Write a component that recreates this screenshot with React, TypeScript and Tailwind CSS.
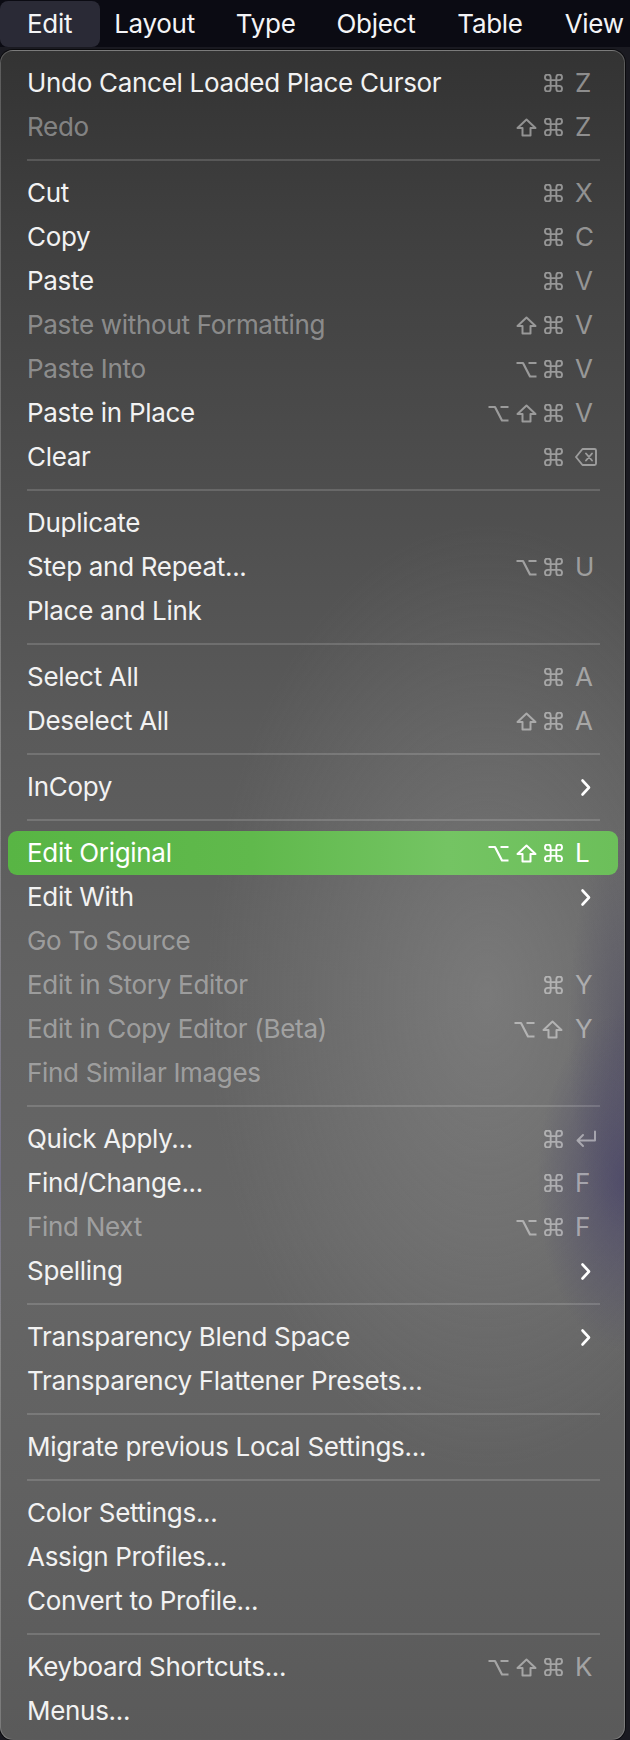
import React from "react";

type Mod = "opt" | "shift" | "cmd";
type Item =
  | { label: string; dis?: boolean; mods?: Mod[]; k?: string; sub?: boolean; hi?: boolean }
  | "sep";

const items: Item[] = [
  { label: "Undo Cancel Loaded Place Cursor", mods: ["cmd"], k: "Z" },
  { label: "Redo", dis: true, mods: ["shift", "cmd"], k: "Z" },
  "sep",
  { label: "Cut", mods: ["cmd"], k: "X" },
  { label: "Copy", mods: ["cmd"], k: "C" },
  { label: "Paste", mods: ["cmd"], k: "V" },
  { label: "Paste without Formatting", dis: true, mods: ["shift", "cmd"], k: "V" },
  { label: "Paste Into", dis: true, mods: ["opt", "cmd"], k: "V" },
  { label: "Paste in Place", mods: ["opt", "shift", "cmd"], k: "V" },
  { label: "Clear", mods: ["cmd"], k: "del" },
  "sep",
  { label: "Duplicate" },
  { label: "Step and Repeat...", mods: ["opt", "cmd"], k: "U" },
  { label: "Place and Link" },
  "sep",
  { label: "Select All", mods: ["cmd"], k: "A" },
  { label: "Deselect All", mods: ["shift", "cmd"], k: "A" },
  "sep",
  { label: "InCopy", sub: true },
  "sep",
  { label: "Edit Original", hi: true, mods: ["opt", "shift", "cmd"], k: "L" },
  { label: "Edit With", sub: true },
  { label: "Go To Source", dis: true },
  { label: "Edit in Story Editor", dis: true, mods: ["cmd"], k: "Y" },
  { label: "Edit in Copy Editor (Beta)", dis: true, mods: ["opt", "shift"], k: "Y" },
  { label: "Find Similar Images", dis: true },
  "sep",
  { label: "Quick Apply...", mods: ["cmd"], k: "ret" },
  { label: "Find/Change...", mods: ["cmd"], k: "F" },
  { label: "Find Next", dis: true, mods: ["opt", "cmd"], k: "F" },
  { label: "Spelling", sub: true },
  "sep",
  { label: "Transparency Blend Space", sub: true },
  { label: "Transparency Flattener Presets..." },
  "sep",
  { label: "Migrate previous Local Settings..." },
  "sep",
  { label: "Color Settings..." },
  { label: "Assign Profiles..." },
  { label: "Convert to Profile..." },
  "sep",
  { label: "Keyboard Shortcuts...", mods: ["opt", "shift", "cmd"], k: "K" },
  { label: "Menus..." },
];

const CmdGlyph = () => (
  <svg width="19" height="18" viewBox="2.5 2.5 19 19" fill="none" stroke="currentColor" strokeWidth="2" strokeLinecap="round" strokeLinejoin="round">
    <path d="M15 6v12a3 3 0 1 0 3-3H6a3 3 0 1 0 3 3V6a3 3 0 1 0-3 3h12a3 3 0 1 0-3-3" />
  </svg>
);
const ShiftGlyph = () => (
  <svg width="21" height="19" viewBox="0 0 21 19" fill="none" stroke="currentColor" strokeWidth="2" strokeLinejoin="round">
    <path d="M10.5 1.5 L19.5 10 H14.5 V17.5 H6.5 V10 H1.5 Z" />
  </svg>
);
const OptGlyph = () => (
  <svg width="21" height="17" viewBox="0 0 21 17" fill="none" stroke="currentColor" strokeWidth="2.2" strokeLinecap="butt" strokeLinejoin="round">
    <path d="M0.5 2 H7 L14 15.5 H20.5 M12.5 2 H20.5" />
  </svg>
);
const DelGlyph = () => (
  <svg width="22" height="18" viewBox="0 0 22 18" fill="none" stroke="currentColor" strokeWidth="1.9" strokeLinejoin="round" strokeLinecap="round">
    <path d="M7.5 1 H19.5 a1.5 1.5 0 0 1 1.5 1.5 V15.5 a1.5 1.5 0 0 1 -1.5 1.5 H7.5 L1 9 Z" />
    <path d="M11 5.5 L17 12.5 M17 5.5 L11 12.5" />
  </svg>
);
const RetGlyph = () => (
  <svg width="22" height="18" viewBox="0 0 22 18" fill="none" stroke="currentColor" strokeWidth="2" strokeLinejoin="round" strokeLinecap="round">
    <path d="M20 1.5 V10.5 H2.5 M8 5 L2.5 10.5 L8 16" />
  </svg>
);
const Chevron = () => (
  <svg width="11" height="19" viewBox="0 0 11 19" fill="none" stroke="currentColor" strokeWidth="2.6" strokeLinecap="round" strokeLinejoin="round">
    <path d="M2.5 2.5 L9 9.5 L2.5 16.5" />
  </svg>
);

const modGlyph = (m: Mod) => (m === "cmd" ? <CmdGlyph /> : m === "shift" ? <ShiftGlyph /> : <OptGlyph />);

function Shortcut({ mods, k }: { mods: Mod[]; k: string }) {
  return (
    <div className="flex items-center">
      <div className="flex items-center gap-[7px]">
        {mods.map((m, i) => (
          <span key={i} className="flex items-center">
            {modGlyph(m)}
          </span>
        ))}
      </div>
      <span className="ml-[12px] flex w-[22px] items-center">
        {k === "del" ? <DelGlyph /> : k === "ret" ? <RetGlyph /> : k}
      </span>
    </div>
  );
}

export default function App() {
  return (
    <div
      className="min-h-[1740px] w-[630px] overflow-hidden bg-[#1a1a21] text-[26px] leading-[44px] tracking-[-0.3px] antialiased"
      style={{ fontFamily: "Inter, 'Noto Sans', sans-serif" }}
    >
      <div className="flex h-[47px] items-center whitespace-nowrap bg-[#0b0b13] text-[#f4f4f6]">
        <div className="flex h-[46px] items-center rounded-[8px] bg-[#2a2a36] pl-[27px] pr-[28px]">Edit</div>
        <div className="ml-[14px]">Layout</div>
        <div className="ml-[41px]">Type</div>
        <div className="ml-[41px]">Object</div>
        <div className="ml-[42px]">Table</div>
        <div className="ml-[42px]">View</div>
      </div>
      <div className="mt-[3px] w-[625px] rounded-[13px] border border-white/20 bg-[radial-gradient(ellipse_14%_10%_at_100%_67%,rgba(64,58,104,0.6),rgba(64,58,104,0)),radial-gradient(ellipse_9%_12%_at_100%_58%,rgba(72,68,96,0.45),rgba(72,68,96,0)),radial-gradient(ellipse_45%_28%_at_78%_56%,rgba(150,150,150,0.45),rgba(150,150,150,0)),linear-gradient(180deg,#333333_0%,#3f3f3f_10%,#4d4d4d_25%,#5a5a5a_40%,#626262_55%,#666666_70%,#616161_85%,#5a5a5a_100%)] pb-[6px] pl-[7px] pr-[6px] pt-[10px] shadow-[0_0_0_1px_rgba(0,0,0,0.6)]">
        {items.map((it, i) => {
          if (it === "sep") {
            return <div key={i} className="my-[10px] ml-[19px] mr-[18px] h-[2px] bg-white/15" />;
          }
          const textCls = it.hi ? "text-white" : it.dis ? "text-white/40" : "text-[#f2f2f2]";
          const scCls = it.hi ? "text-white" : "text-white/45";
          return (
            <div
              key={i}
              className={
                "flex h-[44px] items-center rounded-[9px] pl-[19px] pr-[21px] " +
                (it.hi
                  ? "bg-[linear-gradient(90deg,#58b544_0%,#60b94c_40%,#74c463_72%,#6cbf5a_100%)]"
                  : "")
              }
            >
              <span className={"flex-1 whitespace-nowrap " + textCls}>{it.label}</span>
              {it.mods && it.k && (
                <span className={scCls}>
                  <Shortcut mods={it.mods} k={it.k} />
                </span>
              )}
              {it.sub && (
                <span className="mr-[6px] flex items-center text-white">
                  <Chevron />
                </span>
              )}
            </div>
          );
        })}
      </div>
    </div>
  );
}
